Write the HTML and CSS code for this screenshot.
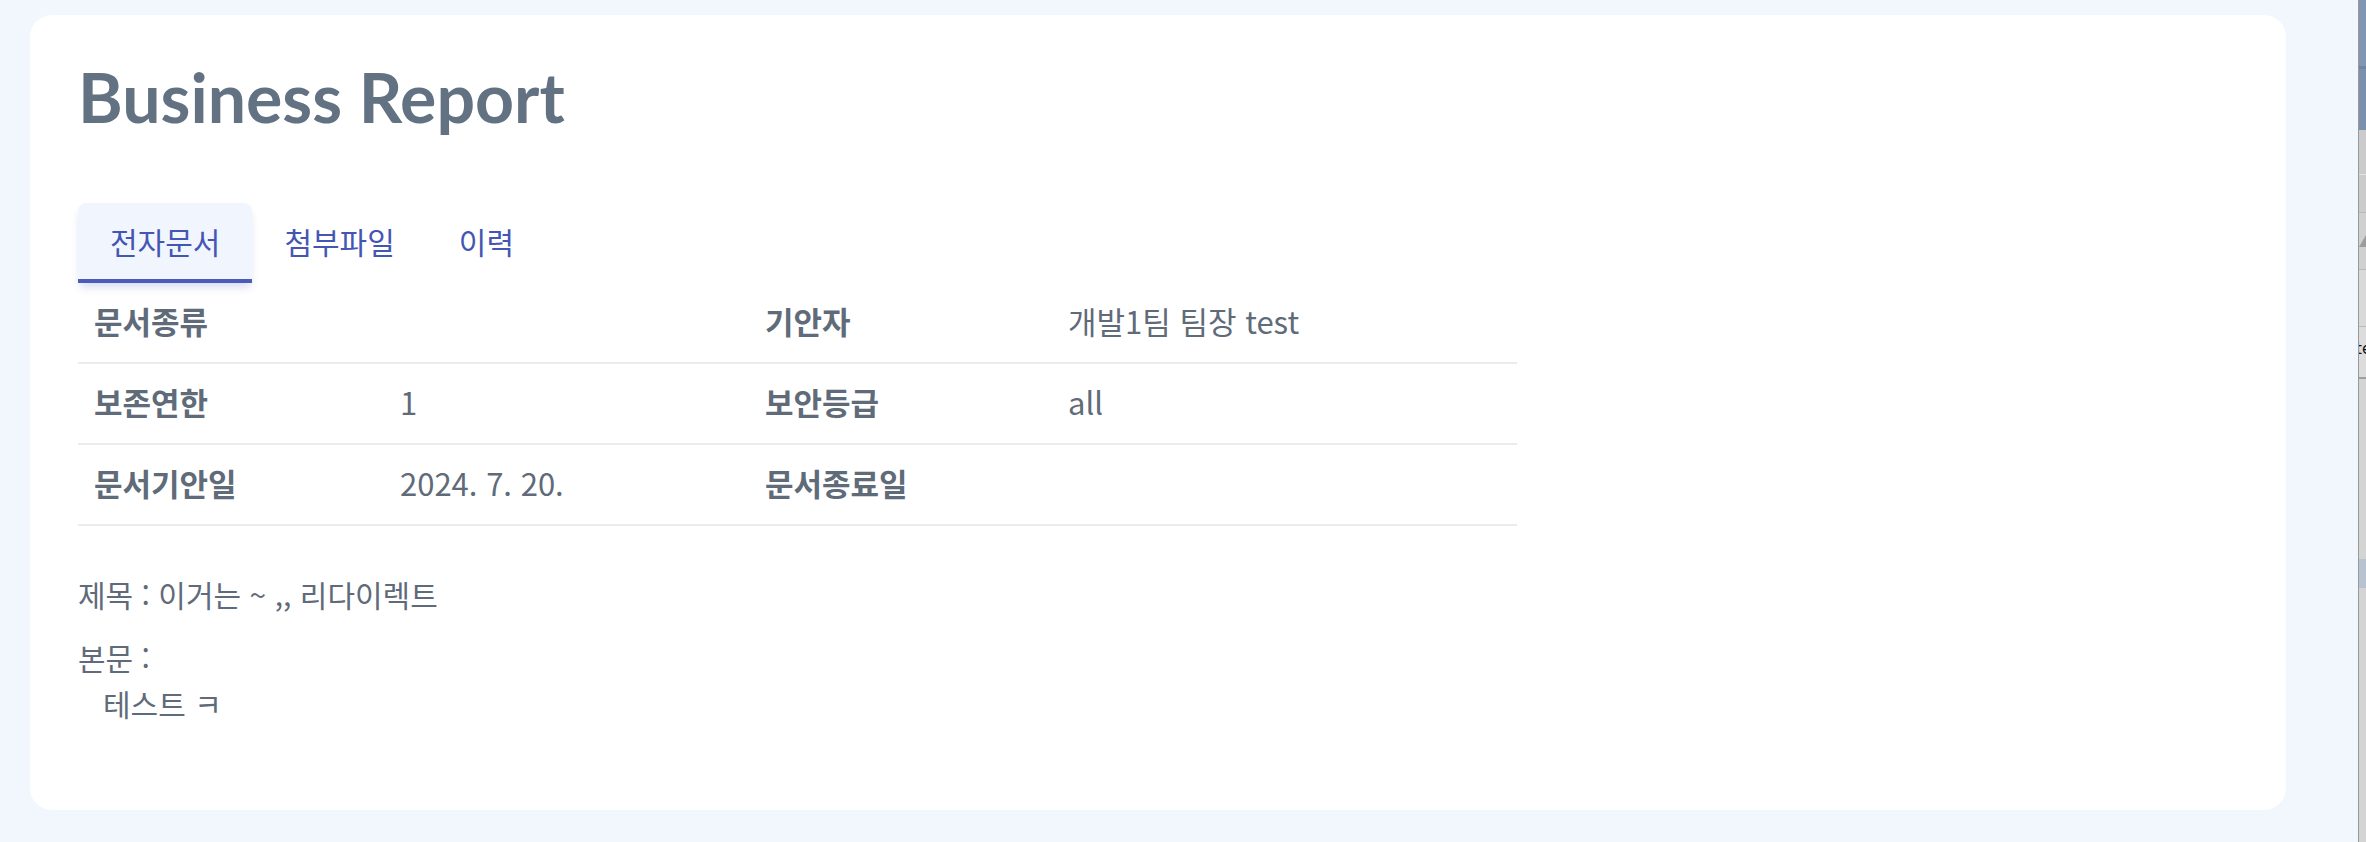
FILE: index.html
```html
<!DOCTYPE html>
<html lang="ko">
<head>
<meta charset="utf-8">
<title>Business Report</title>
<link rel="stylesheet" href="styles.css">
</head>
<body>
<div class="page">
  <main class="main">
    <section class="card">
      <h1 class="title">Business Report</h1>
      <nav class="tabs">
        <button class="tab active">전자문서</button>
        <button class="tab">첨부파일</button>
        <button class="tab">이력</button>
      </nav>
      <table class="info">
        <colgroup>
          <col class="c1"><col class="c2"><col class="c3"><col class="c4">
        </colgroup>
        <tbody>
          <tr><th>문서종류</th><td></td><th>기안자</th><td>개발1팀 팀장 test</td></tr>
          <tr><th>보존연한</th><td>1</td><th>보안등급</th><td>all</td></tr>
          <tr><th>문서기안일</th><td>2024. 7. 20.</td><th>문서종료일</th><td></td></tr>
        </tbody>
      </table>
      <div class="doc">
        <p class="subject">제목 : 이거는 ~ ,, 리다이렉트</p>
        <p class="body-label">본문 :</p>
        <p class="body-text">테스트 ㅋ</p>
      </div>
    </section>
  </main>
  <aside class="side">
    <div class="s-blue1"></div>
    <div class="s-blue2"></div>
    <div class="s-row s-r1"></div>
    <div class="s-row s-r2"></div>
    <div class="s-row s-r3"><span class="s-tri"></span></div>
    <div class="s-row s-r4"></div>
    <div class="s-row s-r5"><span class="s-txt">te</span></div>
    <div class="s-rest"><div class="s-sel"></div></div>
  </aside>
</div>
</body>
</html>
```
FILE: styles.css
```css
html, body {
  margin: 0;
  padding: 0;
  height: 100%;
}
body {
  background: #f2f7fe;
  font-family: "Noto Sans CJK KR", "Noto Sans", sans-serif;
  color: #5f6b79;
  overflow: hidden;
}
.page {
  display: flex;
  height: 842px;
}
.main {
  flex: 1;
  padding: 15px 72px 0 30px;
}
.card {
  background: #ffffff;
  border-radius: 22px;
  min-height: 795px;
  box-sizing: border-box;
  padding: 42px 48px 40px 48px;
}
.title {
  font-family: "Lato", "Noto Sans", sans-serif;
  font-weight: 700;
  font-size: 68px;
  line-height: 80px;
  color: #637282;
  margin: 0 0 66px 0;
}
.tabs {
  display: flex;
}
.tab {
  border: none;
  background: transparent;
  font-family: "Noto Sans CJK KR", sans-serif;
  font-size: 30px;
  color: #4456b4;
  padding: 0 32px;
  height: 80px;
  line-height: 74px;
  border-radius: 8px 8px 0 0;
  border-bottom: 4px solid transparent;
  box-sizing: border-box;
}
.tab.active {
  background: #f1f6fe;
  border-bottom-color: #4a5bb9;
  box-shadow: 0 6px 8px -2px rgba(74, 91, 185, 0.22);
}
.info {
  border-collapse: collapse;
  table-layout: fixed;
  width: 1439px;
  font-size: 31px;
}
.c1 { width: 306px; }
.c2 { width: 365px; }
.c3 { width: 303px; }
.c4 { width: 465px; }
.info th, .info td {
  text-align: left;
  padding: 0 16px 5px 16px;
  height: 74px;
  border-bottom: 2px solid #ebebeb;
  vertical-align: middle;
}
.info th {
  font-weight: 700;
}
.info td {
  font-weight: 400;
}
.doc {
  padding-top: 45px;
  font-size: 30px;
}
.doc p {
  margin: 0;
  line-height: 46px;
}
.subject {
  margin-bottom: 17px !important;
}
.body-text {
  padding-left: 25px;
}
.side {
  width: 8px;
  display: flex;
  flex-direction: column;
  border-left: 1px solid #9a9a9a;
  box-sizing: border-box;
  background: #d3d3d3;
}
.s-blue1 { height: 66px; background: #8196b0; border-bottom: 3px solid #6f86a3; }
.s-blue2 { height: 61px; background: #7a90ab; }
.s-row { border-bottom: 1px solid #b9b9b9; background: #cbcbcb; position: relative; overflow: hidden; }
.s-r1 { height: 44px; border-bottom-color: #e2e2e2; }
.s-r2 { height: 37px; }
.s-r3 { height: 56px; background: #d0d0d0; }
.s-r4 { height: 56px; background: #d9d9d9; }
.s-r5 { height: 50px; background: #dcdcdc; border-bottom: 2px solid #9f9f9f; }
.s-tri {
  position: absolute;
  left: 0;
  top: 22px;
  width: 0;
  height: 0;
  border-bottom: 12px solid #9c9c9c;
  border-left: 7px solid transparent;
}
.s-txt {
  position: absolute;
  left: -3px;
  top: 14px;
  font-family: "DejaVu Sans", sans-serif;
  font-size: 15px;
  color: #111;
  line-height: 16px;
}
.s-rest { flex: 1; background: #d4d4d4; padding-top: 180px; }
.s-sel { height: 29px; background: #b8c3d2; }
```
